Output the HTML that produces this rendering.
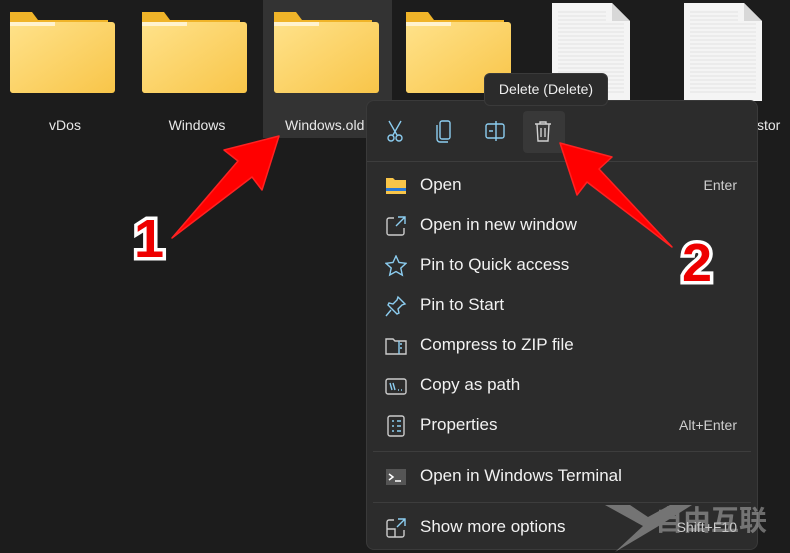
<!DOCTYPE html>
<html><head><meta charset="utf-8"><style>
*{margin:0;padding:0;box-sizing:border-box}
body{width:790px;height:553px;background:#1c1c1c;position:relative;overflow:hidden;font-family:"Liberation Sans",sans-serif;color:#fff}
.abs{position:absolute}
.lbl{position:absolute;top:117px;font-size:14px;color:#e8e8e8;text-align:center;width:130px}
.menu{position:absolute;left:366px;top:100px;width:392px;height:450px;background:#2c2c2c;border:1px solid #3a3a3a;border-radius:8px}
.item{position:absolute;left:18px;font-size:17px;color:#f2f2f2;height:24px;line-height:24px}
.item .t{position:absolute;left:35px;white-space:nowrap}
.item svg{position:absolute;left:0;top:2px}
.sc{position:absolute;right:20px;font-size:14px;color:#cfcfcf}
.sep{position:absolute;left:6px;right:6px;height:1px;background:#3d3d3d}
.num{position:absolute;font-size:54px;font-weight:bold;color:#e00;-webkit-text-stroke:7px #fff;paint-order:stroke fill;font-family:"Liberation Sans",sans-serif}
</style></head><body>
<div class="abs" style="left:263px;top:0;width:129px;height:138px;background:#333"></div>
<svg class="abs" style="left:0;top:0" width="790" height="110">
<defs><linearGradient id="g" x1="0" y1="0" x2="1" y2="1"><stop offset="0" stop-color="#ffe28a"/><stop offset="1" stop-color="#f8c549"/></linearGradient></defs>
<g id="f"><path d="M10 12 h22 l6 8 h70 v70 a3 3 0 0 1-3 3 H13 a3 3 0 0 1-3-3z" fill="#f0b429"/><rect x="10" y="22" width="105" height="71" rx="3" fill="url(#g)"/><rect x="10" y="22" width="45" height="4" fill="#fff3cf"/></g>
<use href="#f" x="132"/><use href="#f" x="264"/><use href="#f" x="396"/>
<path d="M552 3 h60 l18 18 v80 h-78z" fill="#f4f4f4"/><path d="M612 3 v18 h18z" fill="#d8d8d8"/>
<path d="M684 3 h60 l18 18 v80 h-78z" fill="#f4f4f4"/><path d="M744 3 v18 h18z" fill="#d8d8d8"/>
<g stroke="#cfcfcf" stroke-width="0.6"><path d="M558 12h48M558 16h48M558 20h48M558 24h66M558 28h66M558 32h66M558 36h66M558 40h66M558 44h66M558 48h66M558 52h66M558 56h66M558 60h66M558 64h66M558 68h66M558 72h66M558 76h66M558 80h66M558 84h66M558 88h66M558 92h66"/><path d="M690 12h48M690 16h48M690 20h48M690 24h66M690 28h66M690 32h66M690 36h66M690 40h66M690 44h66M690 48h66M690 52h66M690 56h66M690 60h66M690 64h66M690 68h66M690 72h66M690 76h66M690 80h66M690 84h66M690 88h66M690 92h66"/></g>
</svg>
<div class="lbl" style="left:0">vDos</div>
<div class="lbl" style="left:132px">Windows</div>
<div class="lbl" style="left:264px;text-align:left;padding-left:21px">Windows.old</div>
<div class="lbl" style="left:700px;text-align:left;padding-left:57px">stor</div>
<div class="menu">
 <div class="abs" style="left:156px;top:10px;width:42px;height:42px;background:#383838;border-radius:4px"></div>
 <svg class="abs" style="left:18px;top:18px" width="200" height="26" fill="none" stroke="#8ccdf0" stroke-width="1.4">
  <path d="M4 2 L12 16 M16 2 L8 16"/><circle cx="6" cy="19" r="3"/><circle cx="14" cy="19" r="3"/>
  <rect x="55" y="2" width="10" height="18" rx="2"/><path d="M52 6 v14 a3 3 0 0 0 3 3 h8"/>
  <rect x="101" y="5" width="18" height="14" rx="2"/><path d="M111 2 v20 M104 12 h4"/>
  <g stroke="#d0d0d0"><path d="M150 5 h16 M155 5 v-2 h6 v2 M152 5 l1 17 h10 l1-17 M156 9 v9 M160 9 v9"/></g>
 </svg>
 <div class="sep" style="top:60px;left:0;right:0"></div>
 <div class="item" style="top:72px"><svg width="22" height="22"><path d="M1 3h7l2 2h11v14H1z" fill="#f8c549"/><rect x="1" y="13" width="20" height="3" fill="#2a78d6"/></svg><span class="t">Open</span></div>
 <div class="sc" style="top:76px">Enter</div>
 <div class="item" style="top:112px"><svg width="22" height="22" fill="none" stroke="#ccc" stroke-width="1.4"><path d="M9 3H4a2 2 0 0 0-2 2v13a2 2 0 0 0 2 2h13a2 2 0 0 0 2-2v-5"/><path d="M13 2h7v7M20 2l-9 9" stroke="#8ccdf0"/></svg><span class="t">Open in new window</span></div>
 <div class="item" style="top:152px"><svg width="22" height="22" fill="none" stroke="#8ccdf0" stroke-width="1.4"><path d="M11 1l3 6.5 7 .8-5.2 4.8 1.5 7L11 16.5 4.7 20l1.5-7L1 8.3l7-.8z"/></svg><span class="t">Pin to Quick access</span></div>
 <div class="item" style="top:192px"><svg width="22" height="22" fill="none" stroke="#8ccdf0" stroke-width="1.4"><path d="M13 2l7 7-3 1-4 4 1 4-2 1-9-9 1-2 4 1 4-4z M6 15l-5 6"/></svg><span class="t">Pin to Start</span></div>
 <div class="item" style="top:232px"><svg width="22" height="22" fill="none" stroke="#ccc" stroke-width="1.4"><path d="M1 4h7l2 2h11v13H1z"/><path d="M14 6v13 M15 9h2M15 13h2" stroke="#8ccdf0"/></svg><span class="t">Compress to ZIP file</span></div>
 <div class="item" style="top:272px"><svg width="22" height="22" fill="none" stroke="#ccc" stroke-width="1.4"><rect x="1" y="4" width="20" height="15" rx="2"/><path d="M5 8l2 7M8 8l2 7M13 15h1M16 15h1" stroke="#8ccdf0"/></svg><span class="t">Copy as path</span></div>
 <div class="item" style="top:312px"><svg width="22" height="22" fill="none" stroke="#ccc" stroke-width="1.4"><rect x="3" y="1" width="16" height="20" rx="2"/><path d="M7 6h2M12 6h4M7 11h2M12 11h4M7 16h2M12 16h4" stroke="#8ccdf0"/></svg><span class="t">Properties</span></div>
 <div class="sc" style="top:316px">Alt+Enter</div>
 <div class="sep" style="top:350px"></div>
 <div class="item" style="top:363px"><svg width="22" height="22"><rect x="1" y="3" width="20" height="16" fill="#555"/><path d="M4 8l4 3-4 3" stroke="#fff" stroke-width="1.5" fill="none"/><path d="M10 15h6" stroke="#fff" stroke-width="1.5"/></svg><span class="t">Open in Windows Terminal</span></div>
 <div class="sep" style="top:401px"></div>
 <div class="item" style="top:414px"><svg width="22" height="22" fill="none" stroke="#ccc" stroke-width="1.4"><path d="M9 3H4a2 2 0 0 0-2 2v13a2 2 0 0 0 2 2h13a2 2 0 0 0 2-2v-5M2 12h8v8"/><path d="M13 2h7v7M20 2l-8 8" stroke="#8ccdf0"/></svg><span class="t">Show more options</span></div>
 <div class="sc" style="top:418px">Shift+F10</div>
</div>
<div class="abs" style="left:484px;top:73px;width:124px;height:33px;background:#2b2b2b;border:1px solid #3a3a3a;border-radius:6px;font-size:14px;line-height:31px;text-align:center;color:#eee">Delete (Delete)</div>
<svg class="abs" style="left:0;top:0" width="790" height="553">
<path d="M279 136 L262 190 L252 177 L172 238 L238 161 L224 150 Z" fill="#f00" stroke="#f22" stroke-width="1.5" stroke-linejoin="round"/>
<path d="M560 143 L612 157 L599 169 L672 247 L587 182 L577 195 Z" fill="#f00" stroke="#f22" stroke-width="1.5" stroke-linejoin="round"/>
<g fill="#bbb" opacity="0.5"><path d="M605 505h25l18 12 22-12h22l-35 22-42 25 28-26z"/><text x="655" y="530" font-size="28" font-weight="bold" font-family="Noto Sans CJK SC,sans-serif">自由互联</text></g>
</svg>
<div class="num" style="left:134px;top:208px">1</div>
<div class="num" style="left:682px;top:232px">2</div>
</body></html>
